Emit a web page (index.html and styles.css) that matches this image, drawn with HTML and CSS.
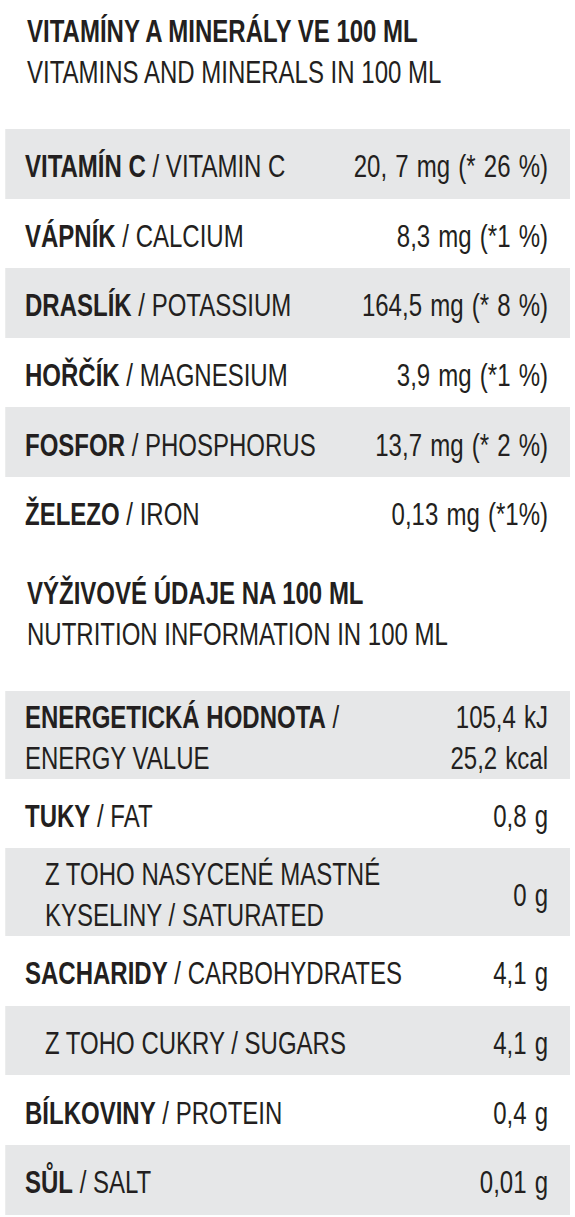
FILE: index.html
```html
<!DOCTYPE html>
<html lang="cs">
<head>
    <meta charset="UTF-8">
    <meta name="viewport" content="width=device-width, initial-scale=1.0">
    <title>Vitamíny a minerály</title>
    <link rel="stylesheet" href="styles.css">
</head>
<body>
    <div class="page">
        <div class="sheet">
            <section class="block">
                <h2 class="block-title">
                    <span class="title-cz">VITAMÍNY A MINERÁLY VE 100 ML</span>
                    <span class="title-en">VITAMINS AND MINERALS IN 100 ML</span>
                </h2>
                <div class="table">
                    <div class="row shaded">
                        <div class="name"><b>VITAMÍN C</b> / VITAMIN C</div>
                        <div class="value">20, 7 mg (* 26 %)</div>
                    </div>
                    <div class="row">
                        <div class="name"><b>VÁPNÍK</b> / CALCIUM</div>
                        <div class="value">8,3 mg (*1 %)</div>
                    </div>
                    <div class="row shaded">
                        <div class="name"><b>DRASLÍK</b> / POTASSIUM</div>
                        <div class="value">164,5 mg (* 8 %)</div>
                    </div>
                    <div class="row">
                        <div class="name"><b>HOŘČÍK</b> / MAGNESIUM</div>
                        <div class="value">3,9 mg (*1 %)</div>
                    </div>
                    <div class="row shaded">
                        <div class="name"><b>FOSFOR</b> / PHOSPHORUS</div>
                        <div class="value">13,7 mg (* 2 %)</div>
                    </div>
                    <div class="row">
                        <div class="name"><b>ŽELEZO</b> / IRON</div>
                        <div class="value">0,13 mg (*1%)</div>
                    </div>
                </div>
            </section>

            <section class="block">
                <h2 class="block-title">
                    <span class="title-cz">VÝŽIVOVÉ ÚDAJE NA 100 ML</span>
                    <span class="title-en">NUTRITION INFORMATION IN 100 ML</span>
                </h2>
                <div class="table">
                    <div class="row shaded tall">
                        <div class="name"><b>ENERGETICKÁ HODNOTA</b> /<br>ENERGY VALUE</div>
                        <div class="value">105,4 kJ<br>25,2 kcal</div>
                    </div>
                    <div class="row">
                        <div class="name"><b>TUKY</b> / FAT</div>
                        <div class="value">0,8 g</div>
                    </div>
                    <div class="row shaded tall sub">
                        <div class="name">Z TOHO NASYCENÉ MASTNÉ<br>KYSELINY / SATURATED</div>
                        <div class="value">0 g</div>
                    </div>
                    <div class="row">
                        <div class="name"><b>SACHARIDY</b> / CARBOHYDRATES</div>
                        <div class="value">4,1 g</div>
                    </div>
                    <div class="row shaded sub">
                        <div class="name">Z TOHO CUKRY / SUGARS</div>
                        <div class="value">4,1 g</div>
                    </div>
                    <div class="row">
                        <div class="name"><b>BÍLKOVINY</b> / PROTEIN</div>
                        <div class="value">0,4 g</div>
                    </div>
                    <div class="row shaded">
                        <div class="name"><b>SŮL</b> / SALT</div>
                        <div class="value">0,01 g</div>
                    </div>
                </div>
            </section>
        </div>
    </div>
</body>
</html>
```

FILE: styles.css
```css
body {
    margin: 0;
    background-color: #ffffff;
    color: #231f20;
    font-family: "Liberation Sans", Arial, sans-serif;
    font-size: 32px;
    line-height: 41px;
}

.page {
    width: 575px;
    overflow: hidden;
}

/* narrow type: Arial squeezed to 75% like the condensed face on the label */
.sheet {
    width: 766.67px;
    padding-top: 11px;
    transform: scaleX(0.75);
    transform-origin: 0 0;
}

.block + .block {
    margin-top: 26px;
}

.block-title {
    margin: 0 0 36px;
    padding-left: 36px;
    font-size: inherit;
    font-weight: normal;
}

.block-title span {
    display: block;
}

.title-cz {
    font-weight: bold;
}

.table {
    margin: 0 6.67px;
}

.row {
    display: flex;
    justify-content: space-between;
    align-items: center;
    min-height: 69.6px;
    padding: 6px 29.33px 0 26.67px;
    box-sizing: border-box;
}

.row.shaded {
    background-color: #e6e7e8;
}

.row.tall {
    min-height: 88px;
}

.row.sub .name {
    padding-left: 26.67px;
}

.name {
    white-space: nowrap;
}

.value {
    text-align: right;
    white-space: nowrap;
    word-spacing: 2px;
}
```
